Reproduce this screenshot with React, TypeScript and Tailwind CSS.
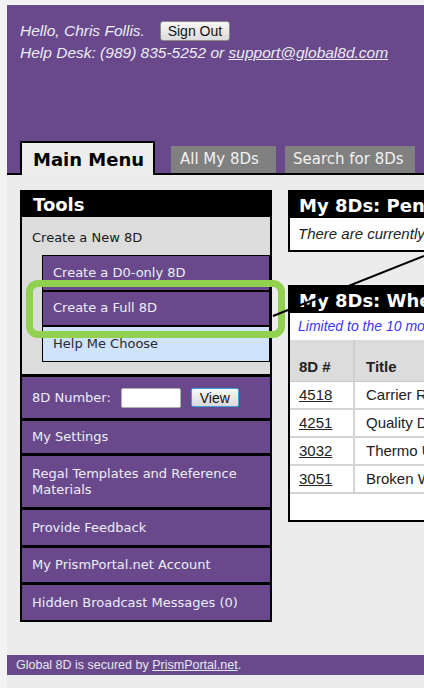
import React from 'react'

const purpleItem =
  'bg-[#69498c] text-[#ededf5] text-[13px] [font-family:"DejaVu_Sans",Verdana,sans-serif] pl-[10px] flex items-center'

const recent8Ds = [
  { id: '4518', title: 'Carrier Rejected Shipment' },
  { id: '4251', title: 'Quality Documentation Missing' },
  { id: '3032', title: 'Thermo Unit Failure' },
  { id: '3051', title: 'Broken Weld on Frame' },
]

function Header() {
  return (
    <div className="h-[170px] bg-[#69498c] border-b-2 border-black flex flex-col pl-[13px] pt-[15px]">
      <div className="[font-family:'Liberation_Sans',Arial,sans-serif] italic text-[15.5px] text-[#ececf2] leading-[22px]">
        <div className="flex items-center">
          <span>Hello, Chris Follis.</span>
          <button className="ml-[15px] h-[20px] w-[70px] not-italic text-[14px] text-[#111] rounded-[3px] border border-[#8a8a8a] bg-gradient-to-b from-[#f6f6f6] to-[#dcdcdc] leading-none">
            Sign Out
          </button>
        </div>
        <div>
          Help Desk: (989) 835-5252 or <a className="underline">support@global8d.com</a>
        </div>
      </div>

      {/* tab strip */}
      <div className="mt-auto flex items-end [font-family:'DejaVu_Sans',Verdana,sans-serif]">
        <div className="relative -mb-[2px] h-[34px] w-[135px] bg-[#ededed] border-2 border-b-0 border-black flex items-center pl-[11px] text-[18px] font-bold text-black">
          Main Menu
        </div>
        <div className="ml-[16px] h-[27px] w-[105px] bg-[#808080] text-[#f0f0f0] text-[15px] flex items-center pl-[9px]">
          All My 8Ds
        </div>
        <div className="ml-[9px] h-[27px] w-[130px] bg-[#808080] text-[#f0f0f0] text-[15px] flex items-center pl-[8px]">
          Search for 8Ds
        </div>
      </div>
    </div>
  )
}

function ToolsPanel() {
  return (
    <div className="w-[252px] shrink-0 self-start border-2 border-black bg-black flex flex-col gap-[3px]">
      <div>
        <div className="h-[25px] bg-black text-white font-bold text-[18px] pl-[11px] flex items-center [font-family:'DejaVu_Sans',Verdana,sans-serif]">
          Tools
        </div>
        <div className="h-[157px] bg-[#dcdcdc] pt-[11px] [font-family:'DejaVu_Sans',Verdana,sans-serif]">
          <div className="pl-[10px] text-[13px] text-[#1a1a1a]">Create a New 8D</div>
          <div className="ml-[20px] mt-[7px] border border-black bg-black flex flex-col gap-[2px]">
            <div className={purpleItem + ' h-[34px] pl-[10px]'}>Create a D0-only 8D</div>
            <div className={purpleItem + ' h-[33px] pl-[10px]'}>Create a Full 8D</div>
            <div className="h-[34px] bg-[#cfe3fb] text-[#2a2a2a] text-[13px] pl-[10px] flex items-center">
              Help Me Choose
            </div>
          </div>
        </div>
      </div>

      <div className={purpleItem + ' h-[41px]'}>
        <span>8D Number:</span>
        <input className="ml-[10px] w-[60px] h-[20px] bg-white border border-[#b0b0b0] rounded-[2px]" />
        <button className="ml-[10px] w-[48px] h-[19px] rounded-[2px] border border-[#3fa0e0] bg-gradient-to-b from-[#f8f8f8] to-[#dadada] text-[#111] text-[14px] leading-none [font-family:'Liberation_Sans',Arial,sans-serif]">
          View
        </button>
      </div>
      <div className={purpleItem + ' h-[32px]'}>My Settings</div>
      <div className={purpleItem + ' h-[51px] leading-[16px]'}>Regal Templates and Reference Materials</div>
      <div className={purpleItem + ' h-[35px]'}>Provide Feedback</div>
      <div className={purpleItem + ' h-[34px]'}>My PrismPortal.net Account</div>
      <div className={purpleItem + ' h-[35px]'}>Hidden Broadcast Messages (0)</div>
    </div>
  )
}

function BoxHeader({ title }: { title: string }) {
  return (
    <div className="h-[26px] bg-black text-white font-bold text-[18px] pl-[9px] flex items-center whitespace-nowrap [font-family:'DejaVu_Sans',Verdana,sans-serif]">
      {title}
    </div>
  )
}

function RightColumn() {
  return (
    <div className="w-[340px] shrink-0 flex flex-col gap-[33px] [font-family:'Liberation_Sans',Arial,sans-serif]">
      <div className="border-2 border-black bg-white">
        <BoxHeader title="My 8Ds: Pending My Action" />
        <div className="h-[32px] flex items-center pl-[8px] italic text-[15px] text-[#222] whitespace-nowrap">
          There are currently no 8Ds pending your action.
        </div>
      </div>

      <div className="border-2 border-black bg-white">
        <BoxHeader title="My 8Ds: Where I'm Involved" />
        <div className="h-[27px] flex items-center pl-[8px] italic text-[14px] text-[#3d35f0] whitespace-nowrap">
          Limited to the 10 most recent 8Ds
        </div>
        <table className="w-full border-collapse text-[15px] text-[#222]">
          <thead>
            <tr className="h-[41px] bg-[#dcdcdc] border-b border-[#c8c8c8]">
              <th className="w-[64px] text-left align-bottom pb-[2px] pl-[9px] border-r-2 border-[#d0d0d0] bg-[#dcdcdc]">8D #</th>
              <th className="text-left align-bottom pb-[2px] pl-[11px]">Title</th>
            </tr>
          </thead>
          <tbody>
            {recent8Ds.map((row) => (
              <tr key={row.id} className="h-[28px] border-b-2 border-[#d4d4d4]">
                <td className="pl-[9px] border-r-2 border-[#d4d4d4]">
                  <a className="underline">{row.id}</a>
                </td>
                <td className="pl-[11px] whitespace-nowrap">{row.title}</td>
              </tr>
            ))}
          </tbody>
        </table>
        <div className="h-[26px]" />
      </div>
    </div>
  )
}

export default function App() {
  return (
    <div className="relative w-[424px] h-[688px] overflow-hidden bg-[#f3f3f3] pl-[7px] pt-[5px]">
      <div className="w-[640px]">
        <Header />
        <div className="h-[480px] bg-[#ececec] flex gap-[16px] pl-[13px] pt-[15px]">
          <ToolsPanel />
          <RightColumn />
        </div>
        <div className="h-[20px] bg-[#69498c] pl-[9px] flex items-center text-[12.5px] text-[#e6e6ee] [font-family:'Liberation_Sans',Arial,sans-serif]">
          Global 8D is secured by&nbsp;<a className="underline">PrismPortal.net</a>.
        </div>
        <div className="h-[13px] bg-[#ececec]" />
      </div>

      {/* callout: highlight ring and leader line */}
      <div className="absolute left-[26px] top-[280px] w-[259px] h-[58px] rounded-[12px] border-[7px] border-[#92d050]" />
      <svg className="absolute left-0 top-0 pointer-events-none" width="424" height="688">
        <line x1="273" y1="316" x2="424" y2="256" stroke="#000" strokeWidth="2" />
      </svg>
    </div>
  )
}
